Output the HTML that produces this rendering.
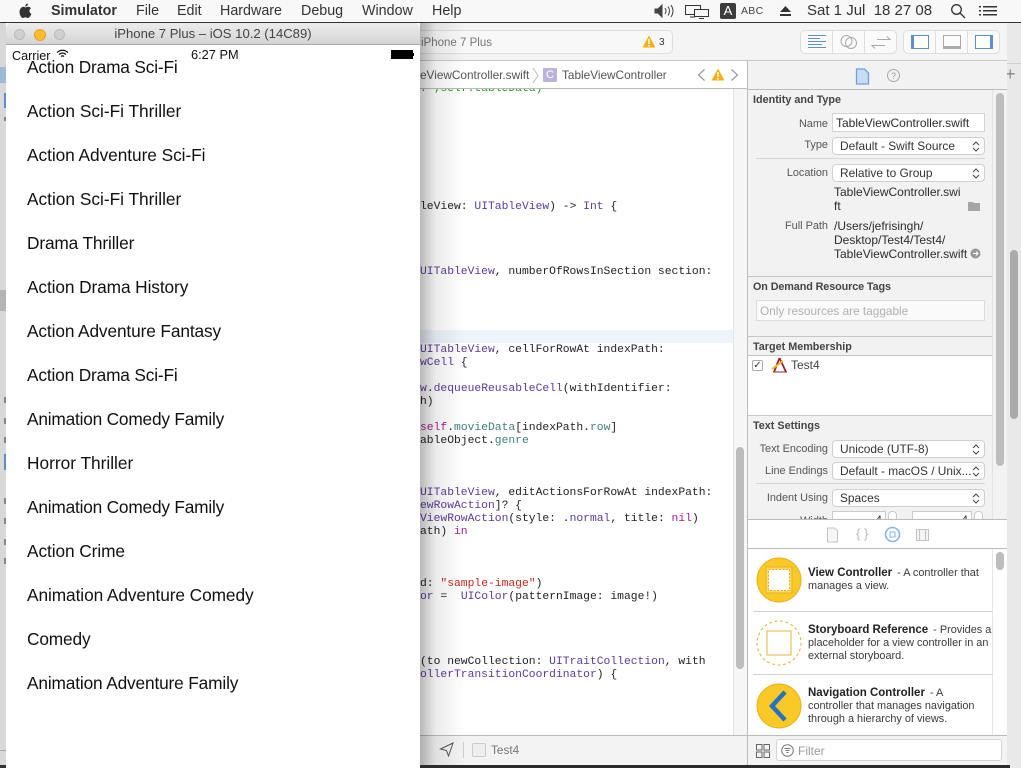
<!DOCTYPE html>
<html><head><meta charset="utf-8"><style>
html,body{margin:0;padding:0;width:1021px;height:768px;overflow:hidden;background:#e4e4e4}
*{box-sizing:border-box}
.a,.t,.c,.l,.r,.m{position:absolute;white-space:nowrap}
.t{font-family:"Liberation Sans",sans-serif;font-size:12px;line-height:14px;color:#2c2c2c}
.r{font-family:"Liberation Sans",sans-serif;font-size:10.9px;line-height:14px;color:#555;text-align:right;width:80px;left:748px}
.h{font-weight:bold;font-size:10.8px;color:#444;left:753px}
.m{font-family:"Liberation Sans",sans-serif;font-size:14.3px;line-height:20px;top:1px;color:#333}
.c{font-family:"Liberation Mono",monospace;font-size:11.33px;line-height:13px;left:420px;color:#222}
.p{color:#5c3b9a}.g{color:#3f7f80}.k{color:#a3218e}.s{color:#c4281c}
.l{font-family:"Liberation Sans",sans-serif;font-size:17.3px;line-height:22px;left:27px;color:#111}
.b{position:absolute;left:832px;width:153px;height:18px;background:#fff;border:1px solid #cfcfcf;border-radius:4px;font-family:"Liberation Sans",sans-serif;font-size:11.9px;line-height:16px;padding-left:7px;color:#333}
.b svg{position:absolute;right:4px;top:2px}
.sec{position:absolute;left:748px;width:244px;height:1px;background:#c6c6c6}
.d{position:absolute;font-family:"Liberation Sans",sans-serif;font-size:10.9px;line-height:13px;color:#3a3a3a;left:808px;white-space:nowrap}
.d b{font-size:11.5px;color:#222;margin-right:2px}
</style></head><body>

<!-- menu bar -->
<div class="a" style="left:0;top:0;width:1021px;height:23px;background:#f8f8f8;border-bottom:1px solid #333"></div>
<svg class="a" style="left:17px;top:3px" width="16" height="16" viewBox="0 0 16 16"><path d="M11 0.5c0 1.700-1.300 3-2.800 3 0-1.600 1.300-3 2.800-3zM8.200 4.400c.8 0 1.600-.7 2.900-.7 1.200 0 2.200.6 2.900 1.600-2.300 1.400-1.900 4.600.4 5.600-.7 1.800-2 4.100-3.400 4.100-1 0-1.400-.6-2.600-.6s-1.700.6-2.600.6C4.300 15 2.500 11.800 2.500 9c0-3.100 2-5.200 4-5.200 1 0 1.200.6 1.700.6z" fill="#333"/></svg>
<div class="m" style="left:51px;font-weight:bold;color:#333">Simulator</div>
<div class="m" style="left:136px">File</div>
<div class="m" style="left:177px">Edit</div>
<div class="m" style="left:220px">Hardware</div>
<div class="m" style="left:301px">Debug</div>
<div class="m" style="left:362px">Window</div>
<div class="m" style="left:432px">Help</div>
<svg class="a" style="left:654px;top:3px" width="24" height="16" viewBox="0 0 24 16" fill="none" stroke="#444"><path d="M1 6h3l4-4v12l-4-4H1z" fill="#444"/><path d="M11 5q2 3 0 6M14 3.500q3 4.500 0 9M17 2q4 6 0 12"/></svg>
<svg class="a" style="left:684px;top:3px" width="26" height="16" viewBox="0 0 26 16" fill="none" stroke="#333"><path d="M1.500 2.500h15v9h-15zM6 14h5"/><path d="M10.500 6.500h14v7h-14z" fill="#f8f8f8"/><path d="M15 15.500h5"/></svg>
<div class="a" style="left:720px;top:3px;width:16px;height:16px;background:#3c3c3c;border-radius:2px;color:#fff;font:13px/16px 'Liberation Sans',sans-serif;text-align:center">A</div>
<div class="t" style="left:741px;top:4px;font-size:10.5px;color:#444;letter-spacing:.3px">ABC</div>
<svg class="a" style="left:779px;top:5px" width="13" height="12" viewBox="0 0 13 12" fill="#333"><path d="M6.500 1L12 7H1zM1 9h11v2H1z"/></svg>
<div class="m" style="left:807px;font-size:15px">Sat 1 Jul&nbsp; 18 27 08</div>
<svg class="a" style="left:950px;top:3px" width="16" height="16" viewBox="0 0 16 16" fill="none" stroke="#333" stroke-width="1.300"><circle cx="6.500" cy="6.500" r="4.800"/><path d="M10 10l5 5"/></svg>
<svg class="a" style="left:979px;top:5px" width="20" height="12" viewBox="0 0 20 12" fill="#333"><path d="M0 1h2v1.500H0zM4 1h14v1.500H4zM0 5h2v1.500H0zM4 5h14v1.500H4zM0 9h2v1.500H0zM4 9h14v1.500H4z"/></svg>

<!-- background right window -->
<div class="a" style="left:1006px;top:23px;width:15px;height:745px;background:#e9e9e9"></div>
<div class="a" style="left:1006px;top:63px;width:15px;height:1px;background:#cfcfcf"></div>
<div class="a" style="left:1010px;top:250px;width:8px;height:169px;background:#aaa;border-radius:4px"></div>
<div class="t" style="left:1005px;top:67px;font-size:18px;color:#888">+</div>

<!-- left sliver -->
<div class="a" style="left:0;top:23px;width:6px;height:745px;background:#d8d8d8"></div>
<div class="a" style="left:0;top:67px;width:6px;height:16px;background:#9db9d8"></div>
<div class="a" style="left:4px;top:93px;width:2px;height:15px;background:#5d8fc4"></div>
<div class="a" style="left:4px;top:117px;width:2px;height:4px;background:#888"></div>
<div class="a" style="left:0;top:290px;width:6px;height:21px;background:#b4b4b4"></div>
<div class="a" style="left:4px;top:397px;width:2px;height:6px;background:#888"></div>
<div class="a" style="left:4px;top:418px;width:2px;height:6px;background:#888"></div>
<div class="a" style="left:4px;top:437px;width:2px;height:6px;background:#888"></div>
<div class="a" style="left:4px;top:454px;width:2px;height:16px;background:#5d8fc4"></div>
<div class="a" style="left:4px;top:498px;width:2px;height:6px;background:#888"></div>
<div class="a" style="left:4px;top:518px;width:2px;height:6px;background:#888"></div>
<div class="a" style="left:4px;top:539px;width:2px;height:6px;background:#888"></div>
<div class="a" style="left:4px;top:558px;width:2px;height:6px;background:#888"></div>
<div class="a" style="left:0;top:750px;width:6px;height:1px;background:#aaa"></div>
<div class="a" style="left:0;top:765px;width:6px;height:3px;background:#333"></div>

<!-- xcode window -->
<div class="a" style="left:420px;top:23px;width:587px;height:742px;background:#fff"></div>
<div class="a" style="left:420px;top:23px;width:587px;height:38px;background:#f4f4f4;border-bottom:1px solid #c8c8c8"></div>
<div class="a" style="left:420px;top:30px;width:253px;height:24px;background:#f8f8f8;border:1px solid #ddd;border-left:0;border-radius:0 5px 5px 0"></div>
<div class="t" style="left:421px;top:36px;font-size:11.5px;color:#777">iPhone 7 Plus</div>
<svg class="a" style="left:642px;top:35px" width="14" height="13" viewBox="0 0 14 13"><path d="M7 .5L13.500 12.500H.5z" fill="#f5b016"/><path d="M6.300 4h1.400v5H6.300zM6.300 10h1.400v1.500H6.300z" fill="#fff"/></svg>
<div class="t" style="left:659px;top:36px;font-size:10px;color:#333">3</div>

<!-- toolbar buttons -->
<div class="a" style="left:800px;top:30px;width:97px;height:24px;background:#fafafa;border:1px solid #ddd;border-radius:5px"></div>
<div class="a" style="left:832px;top:31px;width:1px;height:22px;background:#ddd"></div>
<div class="a" style="left:864px;top:31px;width:1px;height:22px;background:#ddd"></div>
<svg class="a" style="left:807px;top:33px" width="20" height="18" viewBox="0 0 20 18" stroke="#5b8fd0"><path d="M1 2.500h18M1 5.500h12M1 8.500h18M1 11.500h14M1 14.500h18"/></svg>
<svg class="a" style="left:840px;top:34px" width="18" height="16" fill="none" stroke="#aaa"><circle cx="6.500" cy="7" r="5.500"/><circle cx="11" cy="9" r="5.500"/></svg>
<svg class="a" style="left:871px;top:34px" width="20" height="16" fill="none" stroke="#aaa"><path d="M6 5.500h13l-3-3M14 11.500H1l3 3"/></svg>
<div class="a" style="left:903px;top:30px;width:97px;height:24px;background:#fafafa;border:1px solid #ddd;border-radius:5px"></div>
<div class="a" style="left:935px;top:31px;width:1px;height:22px;background:#ddd"></div>
<div class="a" style="left:967px;top:31px;width:1px;height:22px;background:#ddd"></div>
<div class="a" style="left:911px;top:35px;width:18px;height:14px;border:1px solid #5b8fd0;border-left:3px solid #5b8fd0;background:#fff"></div>
<div class="a" style="left:943px;top:35px;width:18px;height:14px;border:1px solid #aaa;border-bottom:3px solid #aaa"></div>
<div class="a" style="left:975px;top:35px;width:18px;height:14px;border:1px solid #5b8fd0;border-right:3px solid #5b8fd0;background:#fff"></div>

<!-- jump bar -->
<div class="a" style="left:420px;top:62px;width:328px;height:27px;background:#fff;border-bottom:1px solid #bbb"></div>
<div class="t" style="left:420px;top:68px;font-size:11.8px;color:#555">eViewController.swift</div>
<svg class="a" style="left:532px;top:67px" width="8" height="17" fill="none" stroke="#bbb"><path d="M1 1l5 7.500-5 7.500"/></svg>
<div class="a" style="left:543px;top:68px;width:14px;height:14px;background:#bcb4d8;color:#fff;font:11px/14px 'Liberation Sans',sans-serif;text-align:center;border-radius:1px">C</div>
<div class="t" style="left:562px;top:68px;font-size:11.8px;color:#555">TableViewController</div>
<svg class="a" style="left:697px;top:68px" width="9" height="14" fill="none" stroke="#999" stroke-width="1.200"><path d="M7.500 1.500L1.500 7l6 5.500"/></svg>
<svg class="a" style="left:711px;top:68px" width="14" height="13" viewBox="0 0 14 13"><path d="M7 .5L13.500 12.500H.5z" fill="#f5b016"/><path d="M6.300 4h1.400v5H6.300zM6.300 10h1.400v1.500H6.300z" fill="#fff"/></svg>
<svg class="a" style="left:730px;top:68px" width="9" height="14" fill="none" stroke="#999" stroke-width="1.200"><path d="M1.500 1.500L7.500 7l-6 5.500"/></svg>

<!-- code -->
<div class="a" style="left:420px;top:330px;width:315px;height:13px;background:#eef4fc"></div>
<div class="a" style="left:733px;top:89px;width:15px;height:646px;background:#f6f6f6;border-left:1px solid #e6e6e6"></div>
<div class="a" style="left:736px;top:447px;width:8px;height:222px;background:#bdbdbd;border-radius:4px"></div>
<div class="a" style="left:420px;top:89px;height:6px;width:200px;overflow:hidden"><div class="c" style="left:0;top:-6px;color:#2f8f2f">. ;self.tableData)</div></div>
<div class="c" style="top:201px">leView: <span class="p">UITableView</span>) -&gt; <span class="p">Int</span> {</div>
<div class="c" style="top:266px"><span class="p">UITableView</span>, numberOfRowsInSection section:</div>
<div class="c" style="top:344px"><span class="p">UITableView</span>, cellForRowAt indexPath:</div>
<div class="c" style="top:357px"><span class="p">wCell</span> {</div>
<div class="c" style="top:383px"><span class="p">w</span>.<span class="p">dequeueReusableCell</span>(withIdentifier:</div>
<div class="c" style="top:396px">h)</div>
<div class="c" style="top:422px"><span class="k">self</span>.<span class="g">movieData</span>[indexPath.<span class="g">row</span>]</div>
<div class="c" style="top:435px">ableObject.<span class="g">genre</span></div>
<div class="c" style="top:487px"><span class="p">UITableView</span>, editActionsForRowAt indexPath:</div>
<div class="c" style="top:500px"><span class="p">ewRowAction</span>]? {</div>
<div class="c" style="top:513px"><span class="p">ViewRowAction</span>(style: .<span class="p">normal</span>, title: <span class="k">nil</span>)</div>
<div class="c" style="top:526px">ath) <span class="k">in</span></div>
<div class="c" style="top:578px">d: <span class="s">"sample-image"</span>)</div>
<div class="c" style="top:591px"><span class="p">or</span> =&nbsp; <span class="p">UIColor</span>(patternImage: image!)</div>
<div class="c" style="top:656px">(to newCollection: <span class="p">UITraitCollection</span>, with</div>
<div class="c" style="top:669px"><span class="p">ollerTransitionCoordinator</span>) {</div>

<!-- debug bar -->
<div class="a" style="left:420px;top:735px;width:328px;height:30px;background:#f3f3f3;border-top:1px solid #bbb"></div>
<svg class="a" style="left:439px;top:742px" width="15" height="15" fill="none" stroke="#555"><path d="M14 1L1.500 7l6 1.500L9.500 14z"/></svg>
<div class="a" style="left:463px;top:742px;width:1px;height:16px;background:#ccc"></div>
<div class="a" style="left:472px;top:743px;width:14px;height:14px;border:1px solid #ccc;background:#eee;border-radius:2px"></div>
<div class="t" style="left:491px;top:743px;color:#777;font-size:11.8px">Test4</div>
<div class="a" style="left:420px;top:765px;width:590px;height:3px;background:#2c2c2c"></div>

<!-- inspector -->
<div class="a" style="left:747px;top:61px;width:1px;height:704px;background:#bbb"></div>
<div class="a" style="left:748px;top:61px;width:259px;height:459px;background:#f2f2f2"></div>
<div class="a" style="left:748px;top:89px;width:259px;height:1px;background:#bbb"></div>
<svg class="a" style="left:855px;top:68px" width="15" height="17" viewBox="0 0 15 17" fill="#c9dcf5" stroke="#6f9fdc" stroke-width="1.300"><path d="M1.500 1h8l4 4v11h-12z"/></svg>
<svg class="a" style="left:886px;top:68px" width="15" height="15" fill="none" stroke="#aaa"><circle cx="7.500" cy="7.500" r="6"/></svg>
<div class="t" style="left:891px;top:69px;font-size:9px;color:#999">?</div>

<div class="a" style="left:996px;top:93px;width:8px;height:373px;background:#bdbdbd;border-radius:4px"></div>
<div class="a" style="left:992px;top:90px;width:1px;height:430px;background:#e2e2e2"></div>

<div class="t h" style="top:93px">Identity and Type</div>
<div class="r" style="top:117px">Name</div>
<div class="a" style="left:832px;top:113px;width:153px;height:19px;background:#fff;border:1px solid #d4d4d4"></div>
<div class="t" style="left:836px;top:116px">TableViewController.swift</div>
<div class="r" style="top:138px">Type</div>
<div class="b" style="top:137px">Default - Swift Source<svg width="8" height="13" fill="none" stroke="#444"><path d="M1 5l3-3 3 3M1 8l3 3 3-3"/></svg></div>
<div class="a" style="left:756px;top:158px;width:229px;height:1px;background:#d5d5d5"></div>
<div class="r" style="top:166px">Location</div>
<div class="b" style="top:164px">Relative to Group<svg width="8" height="13" fill="none" stroke="#444"><path d="M1 5l3-3 3 3M1 8l3 3 3-3"/></svg></div>
<div class="t" style="left:834px;top:185px">TableViewController.swi</div>
<div class="t" style="left:834px;top:199px">ft</div>
<svg class="a" style="left:968px;top:201px" width="12" height="10" fill="#a5a5a5"><path d="M0 1h5l1 1h6v8H0z"/></svg>
<div class="r" style="top:219px">Full Path</div>
<div class="t" style="left:834px;top:219px">/Users/jefrisingh/</div>
<div class="t" style="left:834px;top:233px">Desktop/Test4/Test4/</div>
<div class="t" style="left:834px;top:247px">TableViewController.swift</div>
<svg class="a" style="left:970px;top:248px" width="11" height="11"><circle cx="5.500" cy="5.500" r="5" fill="#999"/><path d="M3 5.500h5M6 3.500l2 2-2 2" stroke="#fff" fill="none"/></svg>
<div class="sec" style="top:276px"></div>
<div class="t h" style="top:280px;letter-spacing:-.1px">On Demand Resource Tags</div>
<div class="a" style="left:756px;top:300px;width:229px;height:21px;background:#fafafa;border:1px solid #dcdcdc"></div>
<div class="t" style="left:760px;top:304px;color:#b0b0b0;font-size:11.8px">Only resources are taggable</div>
<div class="sec" style="top:336px"></div>
<div class="t h" style="top:340px">Target Membership</div>
<div class="a" style="left:748px;top:355px;width:244px;height:61px;background:#fff;border-top:1px solid #c6c6c6;border-bottom:1px solid #c6c6c6"></div>
<div class="a" style="left:752px;top:360px;width:11px;height:11px;background:#fff;border:1px solid #aaa;border-radius:2px;font:10px/10px 'DejaVu Sans',sans-serif;color:#333;text-align:center">✓</div>
<svg class="a" style="left:771px;top:357px" width="17" height="16" viewBox="0 0 17 16"><path d="M8.500 1L3 15M8.500 1L15 15" stroke="#a02030" stroke-width="1.800" fill="none"/><path d="M1 12L12 4" stroke="#e5c020" stroke-width="2"/><path d="M2 15h14" stroke="#a02030"/></svg>
<div class="t" style="left:791px;top:358px;color:#444">Test4</div>
<div class="t h" style="top:419px">Text Settings</div>
<div class="r" style="top:442px">Text Encoding</div>
<div class="b" style="top:440px">Unicode (UTF-8)<svg width="8" height="13" fill="none" stroke="#444"><path d="M1 5l3-3 3 3M1 8l3 3 3-3"/></svg></div>
<div class="r" style="top:464px">Line Endings</div>
<div class="b" style="top:462px">Default - macOS / Unix...<svg width="8" height="13" fill="none" stroke="#444"><path d="M1 5l3-3 3 3M1 8l3 3 3-3"/></svg></div>
<div class="a" style="left:756px;top:483px;width:229px;height:1px;background:#d5d5d5"></div>
<div class="r" style="top:491px">Indent Using</div>
<div class="b" style="top:489px">Spaces<svg width="8" height="13" fill="none" stroke="#444"><path d="M1 5l3-3 3 3M1 8l3 3 3-3"/></svg></div>
<div class="a" style="left:748px;top:511px;width:244px;height:8px;overflow:hidden">
  <div class="r" style="left:0;top:3px">Width</div>
  <div class="a" style="left:84px;top:0;width:54px;height:12px;background:#fff;border:1px solid #ccc;font:11.9px/16px 'Liberation Sans',sans-serif;text-align:right;padding-right:3px;color:#333">4</div>
  <div class="a" style="left:140px;top:0;width:9px;height:12px;background:#fff;border:1px solid #ccc;border-radius:4px"></div>
  <div class="a" style="left:164px;top:0;width:60px;height:12px;background:#fff;border:1px solid #ccc;font:11.9px/16px 'Liberation Sans',sans-serif;text-align:right;padding-right:3px;color:#333">4</div>
  <div class="a" style="left:226px;top:0;width:9px;height:12px;background:#fff;border:1px solid #ccc;border-radius:4px"></div>
</div>

<!-- library -->
<div class="a" style="left:748px;top:519px;width:259px;height:216px;background:#fff;border-top:1px solid #bbb"></div>
<div class="a" style="left:748px;top:548px;width:259px;height:1px;background:#bbb"></div>
<svg class="a" style="left:826px;top:527px" width="13" height="16" fill="#f7f7f7" stroke="#c4c4c4"><path d="M1.500 1h7l3 3v11h-10z"/></svg>
<div class="t" style="left:856px;top:527px;font-size:13px;color:#bbb">{ }</div>
<svg class="a" style="left:884px;top:526px" width="17" height="17" fill="none" stroke="#8ab4ea" stroke-width="1.600"><circle cx="8.500" cy="8.500" r="7"/><rect x="6" y="6" width="5" height="5" stroke-width="1"/></svg>
<svg class="a" style="left:916px;top:529px" width="13" height="12" fill="#f4f4f4" stroke="#c4c4c4"><path d="M.5.5h12v11H.5zM3.500.5v11M9.500.5v11"/></svg>
<div class="a" style="left:992px;top:549px;width:1px;height:186px;background:#e6e6e6"></div>
<div class="a" style="left:996px;top:552px;width:8px;height:18px;background:#bdbdbd;border-radius:4px"></div>
<div class="a" style="left:753px;top:611px;width:240px;height:1px;background:#d0d0d0"></div>
<div class="a" style="left:753px;top:674px;width:240px;height:1px;background:#d0d0d0"></div>

<svg class="a" style="left:756px;top:557px" width="46" height="46" fill="none"><circle cx="23" cy="23" r="22" fill="#fbc926" stroke="#e8b020"/><rect x="10" y="10" width="26" height="26" fill="#fdd866" stroke="#e8b020"/><rect x="12.500" y="12.500" width="21" height="21" fill="#fff"/><rect x="12.500" y="12.500" width="21" height="21" stroke="#e8b020" stroke-dasharray="2 1.500"/></svg>
<div class="d" style="top:567px"><b>View Controller</b> - A controller that</div>
<div class="d" style="top:580px">manages a view.</div>

<svg class="a" style="left:756px;top:620px" width="46" height="46" fill="none" stroke="#e5b43a"><circle cx="23" cy="23" r="22" stroke-dasharray="3 2.500"/><rect x="11" y="11" width="24" height="24"/></svg>
<div class="d" style="top:624px"><b>Storyboard Reference</b> - Provides a</div>
<div class="d" style="top:637px">placeholder for a view controller in an</div>
<div class="d" style="top:650px">external storyboard.</div>

<svg class="a" style="left:756px;top:683px" width="46" height="46" fill="none"><circle cx="23" cy="23" r="22" fill="#fbc926" stroke="#e8b020"/><path d="M29 9L16 23l13 14" stroke="#2472c8" stroke-width="4.500"/></svg>
<div class="d" style="top:687px"><b>Navigation Controller</b> - A</div>
<div class="d" style="top:700px">controller that manages navigation</div>
<div class="d" style="top:713px">through a hierarchy of views.</div>

<div class="a" style="left:748px;top:735px;width:259px;height:30px;background:#f3f3f3;border-top:1px solid #bbb"></div>
<svg class="a" style="left:756px;top:744px" width="14" height="14" fill="none" stroke="#666"><path d="M.5.5h5.500v5.500H.5zM8 .5h5.500v5.500H8zM.5 8h5.500v5.500H.5zM8 8h5.500v5.500H8z"/></svg>
<div class="a" style="left:776px;top:739px;width:226px;height:22px;background:#fff;border:1px solid #d4d4d4;border-radius:3px"></div>
<svg class="a" style="left:781px;top:744px" width="13" height="13" fill="none" stroke="#777"><circle cx="6.500" cy="6.500" r="5.800"/><path d="M3.500 4.500h6M4.500 6.500h4M5.500 8.500h2"/></svg>
<div class="t" style="left:798px;top:744px;color:#999">Filter</div>

<!-- simulator -->
<div class="a" style="left:420px;top:23px;width:45px;height:742px;background:linear-gradient(90deg,rgba(0,0,0,.28),rgba(0,0,0,.08) 35%,rgba(0,0,0,0))"></div>
<div class="a" style="left:6px;top:23px;width:414px;height:745px;background:#fff"></div>
<div class="a" style="left:6px;top:23px;width:414px;height:22px;background:linear-gradient(#ececec,#d4d4d4);border-bottom:1px solid #aaa;border-radius:5px 5px 0 0"></div>
<div class="a" style="left:14px;top:29px;width:11px;height:11px;border-radius:50%;background:#d0d0d0;border:1px solid #bbb"></div>
<div class="a" style="left:34px;top:29px;width:12px;height:12px;border-radius:50%;background:#fcbc2e;border:1px solid #e2a526"></div>
<div class="a" style="left:54px;top:29px;width:11px;height:11px;border-radius:50%;background:#d0d0d0;border:1px solid #bbb"></div>
<div class="t" style="left:6px;width:414px;top:27px;font-size:13.1px;text-align:center;color:#444">iPhone 7 Plus – iOS 10.2 (14C89)</div>

<div class="l" style="top:56px;letter-spacing:-.16px">Action Drama Sci-Fi</div>
<div class="l" style="top:100px">Action Sci-Fi Thriller</div>
<div class="l" style="top:144px;letter-spacing:-.05px">Action Adventure Sci-Fi</div>
<div class="l" style="top:188px">Action Sci-Fi Thriller</div>
<div class="l" style="top:232px;letter-spacing:-.14px">Drama Thriller</div>
<div class="l" style="top:276px;letter-spacing:-.1px">Action Drama History</div>
<div class="l" style="top:320px;letter-spacing:-.12px">Action Adventure Fantasy</div>
<div class="l" style="top:364px;letter-spacing:-.16px">Action Drama Sci-Fi</div>
<div class="l" style="top:408px;letter-spacing:-.2px">Animation Comedy Family</div>
<div class="l" style="top:452px">Horror Thriller</div>
<div class="l" style="top:496px;letter-spacing:-.2px">Animation Comedy Family</div>
<div class="l" style="top:540px;letter-spacing:-.08px">Action Crime</div>
<div class="l" style="top:584px;letter-spacing:-.08px">Animation Adventure Comedy</div>
<div class="l" style="top:628px;letter-spacing:-.15px">Comedy</div>
<div class="l" style="top:672px;letter-spacing:-.15px">Animation Adventure Family</div>

<div class="t" style="left:12px;top:49px;font-size:12.6px;color:#111">Carrier</div>
<svg class="a" style="left:56px;top:49px" width="13" height="10" fill="none" stroke="#111" stroke-width="1.300"><path d="M1 3.500q5.500-4.500 11 0M3 5.500q3.500-3 7 0M5 7.500q1.500-1.300 3 0"/></svg>
<div class="t" style="left:191px;top:48px;font-size:12.8px;color:#111">6:27 PM</div>
<div class="a" style="left:391px;top:50px;width:22px;height:9px;background:#000"></div>
<div class="a" style="left:413px;top:53px;width:1px;height:3px;background:#000"></div>

</body></html>
